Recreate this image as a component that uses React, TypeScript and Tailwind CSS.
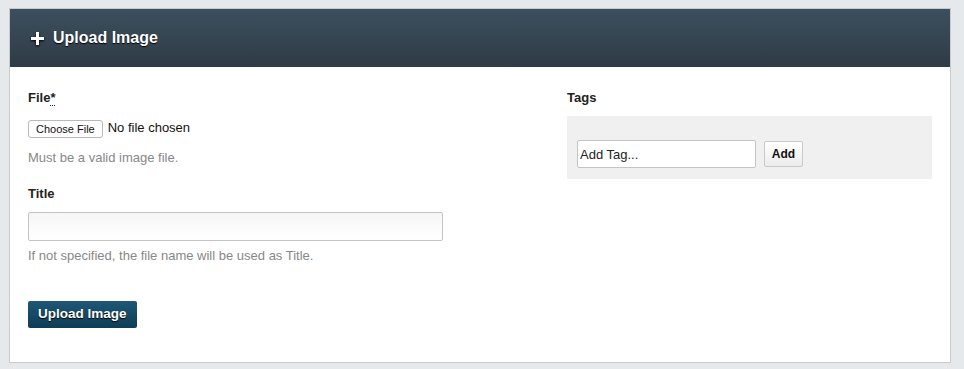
import React from 'react'

export default function App() {
  return (
    <div className="w-[964px] h-[369px] bg-[#e6e9ec] pt-[8px] pl-[9px] font-['Liberation_Sans',Arial,sans-serif] text-[#222]">
      <div className="w-[942px] h-[355px] border border-[#c9cbcd] bg-white flex flex-col">
        <header className="h-[58px] shrink-0 bg-gradient-to-b from-[#3c4f5e] to-[#2f3b45] flex items-center pl-[21px]">
          <h1 className="text-white text-[16px] font-bold flex items-center gap-[9px] [text-shadow:0_1px_1px_#000]">
            <svg width="13" height="13" viewBox="0 0 13 13" className="drop-shadow-[0_1px_1px_#000]">
              <path d="M5 0h3v5h5v3H8v5H5V8H0V5h5z" fill="#fff" />
            </svg>
            Upload Image
          </h1>
        </header>

        <div className="flex pl-[18px] pt-[22px]">
          <div className="w-[539px] flex flex-col">
            <label className="text-[13px] font-bold leading-[16px] mt-[1px]">
              File<abbr className="no-underline border-b border-dotted border-[#222] leading-[8px]">*</abbr>
            </label>
            <div className="flex items-center gap-[5px] mt-[14px]">
              <button className="h-[18px] px-[7px] text-[11px] leading-[16px] border border-[#b9b9b9] rounded-[3px] bg-white text-[#111]">
                Choose File
              </button>
              <span className="text-[13px] text-[#111] -mt-[3px]">No file chosen</span>
            </div>
            <p className="text-[13px] text-[#888] mt-[12px] leading-[16px]">Must be a valid image file.</p>

            <label className="text-[13px] font-bold leading-[16px] mt-[20px]">Title</label>
            <input className="mt-[10px] w-[415px] h-[29px] border border-[#c4c4c4] rounded-[2px] bg-gradient-to-b from-[#f6f6f6] to-white" />
            <p className="text-[13px] text-[#888] mt-[7px] leading-[16px]">
              If not specified, the file name will be used as Title.
            </p>

            <div className="mt-[37px]">
              <button className="h-[27px] px-[10px] text-[13.5px] font-bold text-white rounded-[2px] bg-gradient-to-b from-[#1d5876] to-[#0f3c56] [text-shadow:0_1px_1px_#000]">
                Upload Image
              </button>
            </div>
          </div>

          <div className="w-[365px] flex flex-col">
            <label className="text-[13px] font-bold leading-[16px] mt-[1px]">Tags</label>
            <div className="mt-[10px] h-[63px] bg-[#f0f0f0] flex items-center gap-[8px] pl-[10px] pt-[13px]">
              <input
                placeholder="Add Tag..."
                className="w-[179px] h-[28px] border border-[#c4c4c4] rounded-[2px] bg-white px-[2px] text-[13px] placeholder:text-[#222]"
              />
              <button className="h-[26px] w-[39px] text-[12px] font-bold border border-[#c9c9c9] rounded-[2px] bg-gradient-to-b from-white to-[#ececec] text-[#111]">
                Add
              </button>
            </div>
          </div>
        </div>
      </div>
    </div>
  )
}
